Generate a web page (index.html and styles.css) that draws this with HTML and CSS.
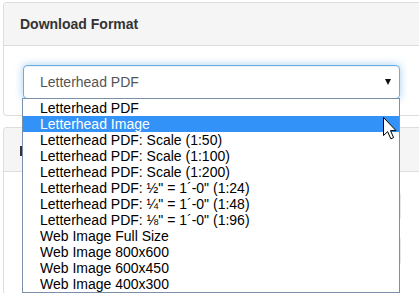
FILE: index.html
```html
<!DOCTYPE html>
<html>
<head>
    <meta charset="UTF-8">
    <title>Download Format</title>
    <link rel="stylesheet" href="styles.css">
</head>
<body>
<div class="panel">
    <div class="panel-heading">
        <h3 class="panel-title">Download Format</h3>
    </div>
    <div class="panel-body">
        <div class="select-wrap">
            <div class="select">
                <span>Letterhead PDF</span>
                <span class="caret"></span>
            </div>
            <ul class="options">
                <li>Letterhead PDF</li>
                <li class="active">Letterhead Image</li>
                <li>Letterhead PDF: Scale (1:50)</li>
                <li>Letterhead PDF: Scale (1:100)</li>
                <li>Letterhead PDF: Scale (1:200)</li>
                <li>Letterhead PDF: ½" = 1´-0" (1:24)</li>
                <li>Letterhead PDF: ¼" = 1´-0" (1:48)</li>
                <li>Letterhead PDF: ⅛" = 1´-0" (1:96)</li>
                <li>Web Image Full Size</li>
                <li>Web Image 800x600</li>
                <li>Web Image 600x450</li>
                <li>Web Image 400x300</li>
            </ul>
            <svg class="cursor" width="15" height="24" viewBox="0 0 15 24">
                <path d="M0.5 0.5 L0.5 18.5 L4.6 14.6 L7.8 21.8 L10.6 20.6 L7.5 13.6 L13 13.6 Z" fill="#fff" stroke="#000" stroke-width="1" stroke-linejoin="miter"/>
            </svg>
        </div>
    </div>
</div>
<div class="panel second">
    <div class="panel-heading">
        <span class="title-stub"></span>
    </div>
    <div class="panel-body">
        <div class="field"></div>
        <div class="field"></div>
    </div>
</div>
</body>
</html>
```
FILE: styles.css
```css
body {
    margin: 0;
    background: #ffffff;
    font-family: "Liberation Sans", Arial, sans-serif;
    color: #333333;
    overflow: hidden;
}

.panel {
    margin: 2px 0 0 3px;
    border: 1px solid #dddddd;
    border-right: none;
    border-radius: 4px 0 0 4px;
    background: #ffffff;
}

.panel.second {
    margin-top: 11px;
}

.panel-heading {
    height: 42px;
    padding: 0 16px;
    display: flex;
    align-items: center;
    background: #f5f5f5;
    border-bottom: 1px solid #dddddd;
    border-radius: 3px 0 0 0;
}

.second .panel-heading {
    height: 43px;
}

.panel-title {
    margin: 0;
    font-size: 14px;
    font-weight: bold;
    color: #333333;
}

.title-stub {
    width: 10px;
    height: 10px;
    margin-top: 2px;
    border-left: 3px solid #333333;
}

.panel-body {
    padding: 19px 19px 16px;
}

.select-wrap {
    position: relative;
    width: 377px;
}

.select {
    height: 34px;
    box-sizing: border-box;
    padding: 0 8px 0 16px;
    display: flex;
    align-items: center;
    justify-content: space-between;
    font-size: 14px;
    color: #555555;
    border: 1px solid #66afe9;
    border-radius: 4px;
    box-shadow: inset 0 1px 1px rgba(0, 0, 0, .075), 0 0 8px rgba(102, 175, 233, .6);
}

.caret {
    width: 0;
    height: 0;
    border-top: 6px solid #111111;
    border-left: 3.5px solid transparent;
    border-right: 3.5px solid transparent;
}

.options {
    position: absolute;
    top: 33px;
    left: -1px;
    width: 378px;
    box-sizing: border-box;
    margin: 0;
    padding: 1px 0 0;
    list-style: none;
    background: #ffffff;
    border: 1px solid #7a8fa8;
    z-index: 2;
}

.options li {
    height: 16px;
    line-height: 16px;
    padding-left: 17px;
    font-size: 14px;
    color: #000000;
    white-space: nowrap;
}

.options li.active {
    background: #3392f8;
    color: #ffffff;
}

.cursor {
    position: absolute;
    top: 52px;
    left: 360px;
    z-index: 3;
}

.field {
    width: 378px;
    height: 30px;
    box-sizing: border-box;
    border: 1px solid #e6e6e6;
    border-radius: 4px;
    margin-bottom: 15px;
}
```
